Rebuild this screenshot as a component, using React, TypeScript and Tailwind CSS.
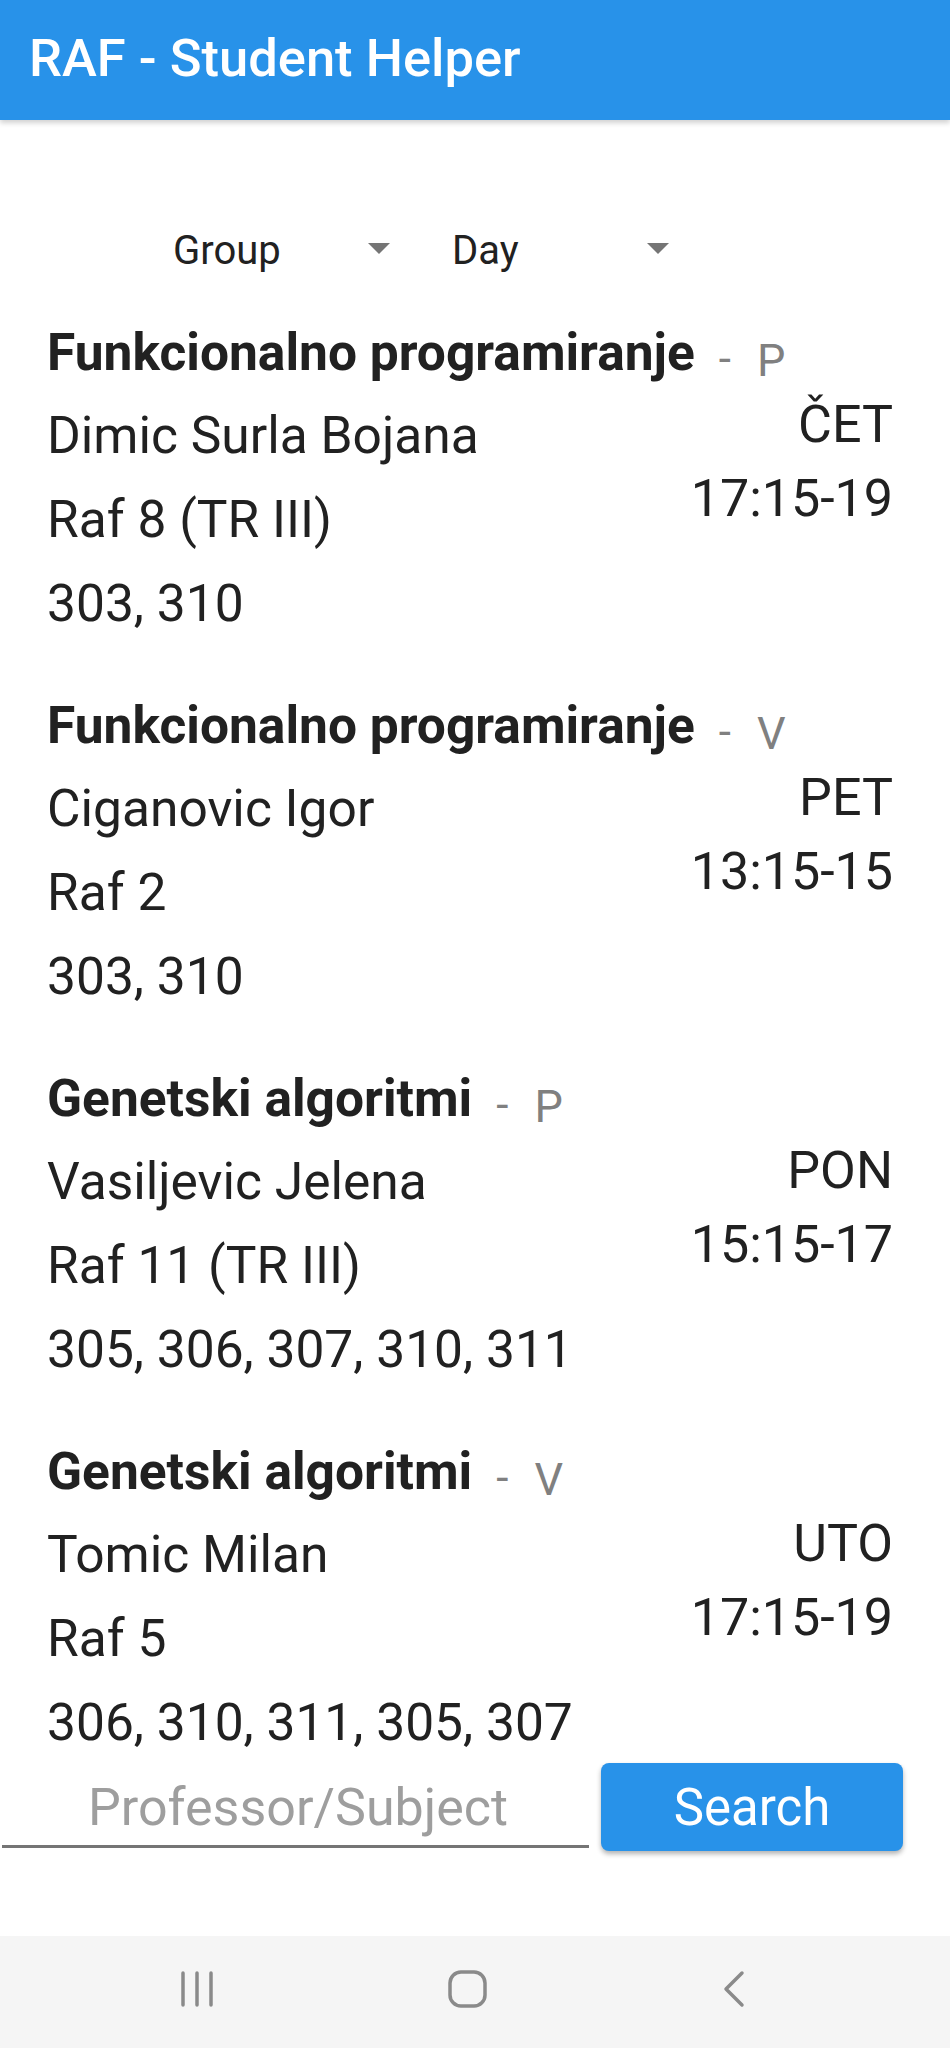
import { useState } from 'react'

type Lesson = {
  subject: string
  type: string
  professor: string
  room: string
  groups: string
  day: string
  time: string
}

const LESSONS: Lesson[] = [
  { subject: 'Funkcionalno programiranje', type: 'P', professor: 'Dimic Surla Bojana', room: 'Raf 8 (TR III)', groups: '303, 310', day: 'ČET', time: '17:15-19' },
  { subject: 'Funkcionalno programiranje', type: 'V', professor: 'Ciganovic Igor', room: 'Raf 2', groups: '303, 310', day: 'PET', time: '13:15-15' },
  { subject: 'Genetski algoritmi', type: 'P', professor: 'Vasiljevic Jelena', room: 'Raf 11 (TR III)', groups: '305, 306, 307, 310, 311', day: 'PON', time: '15:15-17' },
  { subject: 'Genetski algoritmi', type: 'V', professor: 'Tomic Milan', room: 'Raf 5', groups: '306, 310, 311, 305, 307', day: 'UTO', time: '17:15-19' },
]

function Dropdown({ label }: { label: string }) {
  return (
    <div className="w-[217px] h-[60px] flex items-center justify-between">
      <span className="text-[40px] leading-none text-[#212121]">{label}</span>
      <svg width="22" height="11" viewBox="0 0 22 11" className="mt-[-6px]">
        <path d="M0 0 L22 0 L11 11 Z" fill="#757575" />
      </svg>
    </div>
  )
}

function LessonCard({ lesson }: { lesson: Lesson }) {
  return (
    <div className="flex flex-col">
      <div className="h-[82px] flex items-center">
        <span className="text-[51.5px] font-bold leading-none text-[#212121]">{lesson.subject}</span>
        <span className="ml-[24px] text-[44px] leading-none text-[#808080] mt-[12px]">-</span>
        <span className="ml-[26px] text-[45px] leading-none text-[#808080] mt-[14px]">{lesson.type}</span>
      </div>
      <div className="flex justify-between">
        <div className="flex flex-col text-[51.5px] leading-[84px] text-[#212121]">
          <span>{lesson.professor}</span>
          <span>{lesson.room}</span>
          <span>{lesson.groups}</span>
        </div>
        <div className="flex flex-col items-end mt-[-6px] text-[52px] leading-[74px] text-[#212121]">
          <span>{lesson.day}</span>
          <span>{lesson.time}</span>
        </div>
      </div>
    </div>
  )
}

export default function App() {
  const [query, setQuery] = useState('')

  return (
    <div className="w-[950px] h-[2048px] flex flex-col bg-white overflow-hidden" style={{ fontFamily: 'Roboto, "Noto Sans", sans-serif' }}>
      {/* App bar */}
      <div className="h-[120px] shrink-0 bg-[#2892E9] flex items-center pl-[29px] shadow-[0_3px_5px_rgba(0,0,0,0.18)] relative z-10">
        <span className="text-[52.5px] font-medium leading-none text-white mt-[-4px]">RAF - Student Helper</span>
      </div>

      {/* Filters */}
      <div className="flex gap-[62px] pl-[173px] mt-[101px]">
        <Dropdown label="Group" />
        <Dropdown label="Day" />
      </div>

      {/* Lessons */}
      <div className="flex flex-col gap-[39px] mt-[31px] pl-[47px] pr-[57px]">
        {LESSONS.map((l, i) => (
          <LessonCard key={i} lesson={l} />
        ))}
      </div>

      {/* Search */}
      <div className="flex items-start mt-[-2px]">
        <div className="w-[587px] ml-[2px] h-[85px] border-b-[3px] border-[#757575] flex items-center">
          <input
            value={query}
            onChange={e => setQuery(e.target.value)}
            placeholder="Professor/Subject"
            className="w-full pl-[86px] text-[52px] leading-none bg-transparent outline-none text-[#212121] placeholder:text-[#9e9e9e] mt-[6px]"
          />
        </div>
        <button className="ml-[12px] w-[302px] h-[88px] rounded-[8px] bg-[#2892E9] text-white text-[51px] leading-none shadow-[0_3px_5px_rgba(0,0,0,0.3)]">
          Search
        </button>
      </div>

      <div className="flex-1" />

      {/* Android nav bar */}
      <div className="h-[112px] shrink-0 bg-[#f5f5f5] flex items-center">
        <div className="w-[950px] flex items-center justify-between pl-[181px] pr-[204px] mt-[-6px]">
          <svg width="32" height="36" viewBox="0 0 32 36">
            <g stroke="#8a8a8a" strokeWidth="3.5" strokeLinecap="round">
              <line x1="2" y1="2" x2="2" y2="34" />
              <line x1="16" y1="2" x2="16" y2="34" />
              <line x1="30" y1="2" x2="30" y2="34" />
            </g>
          </svg>
          <svg width="40" height="38" viewBox="0 0 40 38">
            <rect x="2" y="2" width="35" height="34" rx="11" fill="none" stroke="#8a8a8a" strokeWidth="3.5" />
          </svg>
          <svg width="24" height="38" viewBox="0 0 24 38">
            <path d="M20 3 L4 19 L20 35" fill="none" stroke="#8a8a8a" strokeWidth="3.5" strokeLinecap="round" strokeLinejoin="round" />
          </svg>
        </div>
      </div>
    </div>
  )
}
